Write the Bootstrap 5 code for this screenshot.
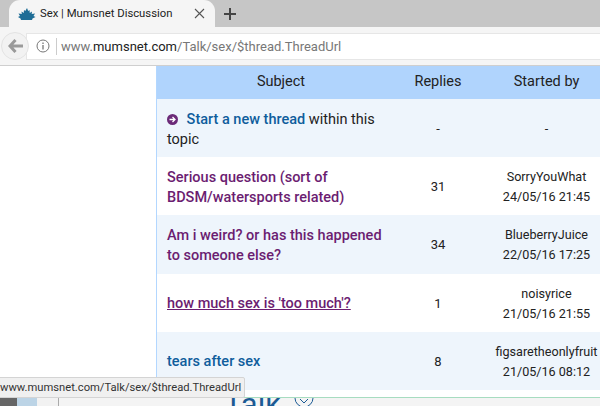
<!DOCTYPE html>
<html><head><meta charset="utf-8">
<link href="https://cdn.jsdelivr.net/npm/bootstrap@5.3.0/dist/css/bootstrap.min.css" rel="stylesheet">
<style>
html,body{margin:0;width:600px;height:406px;overflow:hidden;background:#fff}
.win{width:600px;height:406px;position:relative;overflow:hidden}
.tabbar{height:27px;background:#c6c6c6;font-family:Roboto,"Liberation Sans",sans-serif;color:#222}
.tabx{width:206px;height:27px;margin-left:9px;background:#f5f5f5;border-radius:11px 11px 0 0;padding-left:9px}
.tt{margin-left:4px;width:132px;white-space:nowrap;font-size:11.3px;line-height:27px;flex:none}
.closex{margin-left:22px;flex:none}
.plus{margin-left:9px;flex:none}
.urlbar{height:39px;background:#f5f5f5;border-bottom:1px solid #cfcfcf}
.urlin{flex:1;height:27px;margin-left:-3px;background:#fff;border:1px solid #e6e6e6;border-right:0;font:13px/25px Roboto,"Liberation Sans",sans-serif;color:#777;white-space:nowrap;padding-left:9px}
.urlin b{font-weight:400;color:#222}
.backb{width:28px;height:28px;border-radius:50%;border:1px solid #e3e3e3;background:#f2f2f2;margin-left:1px;z-index:1;flex:none}
.sep{width:1px;height:17px;background:#ccc;margin:0 4px 0 6px;flex:none}
.body{height:333px}
.left{width:156px;flex:none}
.tbl{width:444px;flex:none;border-left:1px solid #b3d7ff;font:14px/20px Roboto,"Liberation Sans",sans-serif;color:#222}
.tr-x{height:58.2px;background:#fff}
.tr-x.alt{background:#eef5fc}
.tr-x.hd{height:33px;background:#b0d4fd;padding-bottom:2px}
.c1{width:250px;padding:3px 24px 0 10px;flex:none;font-size:14.5px}
.c2{width:62px;padding-top:2px;flex:none;text-align:center;font-size:13px}
.c3{width:131px;padding:2px 0 0 24px;flex:none;text-align:center;font-size:12.6px;line-height:20px;white-space:nowrap}
.hd .c1{text-align:center;padding:0 2px 0 0;font-size:14.5px}.hd .c2{padding:0;font-size:14.5px}.hd .c3{padding-top:0;font-size:14.5px}
a.lk{color:#0f5d9c;font-weight:500;text-decoration:none}
a.vis{color:#6b1d71;font-weight:500;text-decoration:none}
a.hov{text-decoration:underline}
.arrow{margin-right:5px;vertical-align:-1px}
.statusx{position:absolute;left:-2px;top:377px;height:21px;width:247px;background:#f0f0f0;border:1px solid #d4d4d4;border-radius:2px;font:11.2px/19px Roboto,"Liberation Sans",sans-serif;color:#333;white-space:nowrap;padding-left:1px;z-index:3}
.under{position:absolute;left:0;top:397px;width:600px;height:9px;background:#f2f2f2;border-top:1px solid #a7dcc0;overflow:hidden}
.underthumb{position:absolute;left:17px;top:0;width:20px;height:9px;background:#bcd4e6}
.underthumb2{position:absolute;left:0;top:0;width:17px;height:9px;background:#666}
.underpanel{position:absolute;left:58px;top:0;width:542px;height:9px;background:#f4f4f4;border-left:1px solid #aaa}
.talk{position:absolute;left:224px;top:-10px;font:31px/34px Roboto,"Liberation Sans",sans-serif;color:#1b5a94;white-space:nowrap}
.chev{position:absolute;left:294px;top:0}
</style></head><body>
<div class="win">
<div class="tabbar d-flex align-items-center">
 <div class="tabx d-flex align-items-center">
  <svg width="18" height="12" viewBox="0 0 18 12" class="flex-shrink-0"><path fill="#1e6d96" d="M9 0l1.200 3 1.300-1 .3 3 2.200-1.500-.3 2.500 3.300-.5-1.500 2.500 2 1-3 1.500-.5 1.500H3l-.5-1.500L0 9l2-1L.5 5.500 3.800 6l-.3-2.500L5.700 5l.3-3 1.300 1z"/></svg>
  <span class="tt">Sex | Mumsnet Discussion</span>
  <svg width="11" height="11" viewBox="0 0 11 11" class="closex"><path d="M1 1l9 9M10 1l-9 9" stroke="#555" stroke-width="1.100" fill="none"/></svg>
 </div>
 <svg width="12" height="12" viewBox="0 0 12 12" class="plus"><path d="M6 0v12M0 6h12" stroke="#444" stroke-width="2" fill="none"/></svg>
</div>
<div class="urlbar d-flex align-items-center">
 <div class="backb d-flex align-items-center justify-content-center">
  <svg width="15" height="14" viewBox="0 0 15 14"><path d="M7.500 1L2 7l5.500 6M2 7h13" stroke="#9a9a9a" stroke-width="3" fill="none"/></svg>
 </div>
 <div class="urlin d-flex align-items-center">
  <svg width="14" height="14" viewBox="0 0 14 14" class="flex-shrink-0"><circle cx="7" cy="7" r="6" fill="none" stroke="#777"/><path d="M7 6v4.500M7 3.500v1.500" stroke="#777" stroke-width="1.300"/></svg>
  <span class="sep"></span>
  <span>www.<b>mumsnet.com</b>/Talk/sex/$thread.ThreadUrl</span>
 </div>
</div>
<div class="body d-flex">
 <div class="left"></div>
 <div class="tbl">
  <div class="tr-x hd d-flex align-items-center"><div class="c1">Subject</div><div class="c2">Replies</div><div class="c3">Started by</div></div>
  <div class="tr-x alt d-flex align-items-center"><div class="c1"><svg class="arrow" width="11" height="11" viewBox="0 0 11 11"><circle cx="5.500" cy="5.500" r="5.500" fill="#6b2a78"/><path d="M2.500 5.500h5M5.500 3l2.500 2.500L5.500 8" stroke="#fff" stroke-width="1.300" fill="none"/></svg> <a class="lk" href="#">Start a new thread</a> within this topic</div><div class="c2">-</div><div class="c3">-</div></div>
  <div class="tr-x d-flex align-items-center"><div class="c1"><a class="vis" href="#">Serious question (sort of BDSM/watersports related)</a></div><div class="c2">31</div><div class="c3">SorryYouWhat<br>24/05/16 21:45</div></div>
  <div class="tr-x alt d-flex align-items-center"><div class="c1"><a class="vis" href="#">Am i weird? or has this happened to someone else?</a></div><div class="c2">34</div><div class="c3">BlueberryJuice<br>22/05/16 17:25</div></div>
  <div class="tr-x d-flex align-items-center"><div class="c1"><a class="vis hov" href="#">how much sex is 'too much'?</a></div><div class="c2">1</div><div class="c3">noisyrice<br>21/05/16 21:55</div></div>
  <div class="tr-x alt d-flex align-items-center"><div class="c1"><a class="lk" href="#">tears after sex</a></div><div class="c2">8</div><div class="c3">figsaretheonlyfruit<br>21/05/16 08:12</div></div>
 </div>
</div>
<div class="statusx">www.mumsnet.com/Talk/sex/$thread.ThreadUrl</div>
<div class="under"><div class="underthumb2"></div><div class="underthumb"></div><div class="underpanel"></div><div class="talk">Talk</div>
<svg class="chev" width="20" height="9" viewBox="0 0 20 9"><path d="M1 0a9 9 0 0 0 18 0M6 1l4 4 4-4" stroke="#1b5a94" fill="none"/></svg></div>
</div>
<script src="https://cdn.jsdelivr.net/npm/bootstrap@5.3.0/dist/js/bootstrap.bundle.min.js"></script>
</body></html>
